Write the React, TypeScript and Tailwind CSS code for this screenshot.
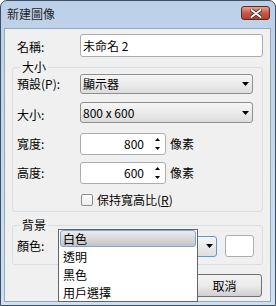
import React from 'react';

const ComboArrow: React.FC = () => (
  <svg width="7" height="4" viewBox="0 0 7 4" className="shrink-0">
    <path d="M0 0h7L3.5 4z" fill="#000" />
  </svg>
);

const SpinArrows: React.FC = () => (
  <svg width="5" height="14" viewBox="0 0 5 14" className="shrink-0">
    <path d="M2.5 1L5 4H0z" fill="#000" />
    <path d="M0 10h5l-2.5 3z" fill="#000" />
  </svg>
);

const CloseButton: React.FC = () => (
  <div className="mt-[5px] mr-[1px] w-[29px] h-[14px] rounded-[3px] border border-[#5e2a24] bg-gradient-to-b from-[#e4a193] via-[#c8594b] to-[#b83c2d] flex items-center justify-center">
    <svg width="12" height="9" viewBox="0 0 12 9">
      <path d="M1.5 1l9 7M10.5 1l-9 7" stroke="#4a2420" strokeWidth="3.6" strokeLinecap="round" />
      <path d="M1.5 1l9 7M10.5 1l-9 7" stroke="#ffffff" strokeWidth="2" strokeLinecap="round" />
    </svg>
  </div>
);

const comboCls =
  'h-full flex items-center justify-between pl-[2px] pr-[3px] rounded-[3px] border border-[#8e8f8f] bg-gradient-to-b from-[#f6f6f6] via-[#ebebeb] to-[#dcdcdc]';

const btnCls =
  'w-[75px] h-[23px] flex items-center justify-center rounded-[3px] border border-[#707070] bg-gradient-to-b from-[#f2f2f2] via-[#ebebeb] to-[#cfcfcf]';

export default function App() {
  return (
    <div className="w-[276px] h-[306px] font-['Noto_Sans_CJK_TC',sans-serif] text-[12px] leading-[14px] text-black">
      <div className="w-full h-full flex flex-col rounded-t-[7px] border border-[#3f4e60] bg-gradient-to-b from-[#bcd0e8] to-[#cfe0f2] pl-[3px] pr-[4px] pb-[3px]">
        {/* Title bar */}
        <div className="h-[27px] shrink-0 flex items-start justify-between">
          <span className="mt-[6px] ml-[3px] text-[#1e1e1e]">新建圖像</span>
          <CloseButton />
        </div>

        {/* Client area */}
        <div className="flex-1 relative bg-[#f0f0f0] border border-[#95a8be]">
          {/* Name */}
          <div className="mt-[5px] flex items-center h-[23px]">
            <div className="w-[75px] pl-[12px] pt-[2px]">名稱:</div>
            <div className="w-[183px] h-full flex items-center pl-[2px] rounded-[3px] border border-[#abadb3] bg-white">
              未命名 2
            </div>
          </div>

          {/* Size group */}
          <fieldset className="mt-[3px] ml-[7px] w-[251px] rounded-[3px] border border-[#d5dfe5] pb-[5px]">
            <legend className="ml-[7px] px-[2px] leading-[14px]">大小</legend>
            <div className="flex items-center h-[20px]">
              <div className="w-[67px] pl-[4px]">預設(P):</div>
              <div className={`w-[173px] ${comboCls}`}>
                <span>顯示器</span>
                <ComboArrow />
              </div>
            </div>
            <div className="mt-[8px] flex items-center h-[21px]">
              <div className="w-[67px] pl-[4px] pt-[5px]">大小:</div>
              <div className={`w-[173px] ${comboCls}`}>
                <span>800 x 600</span>
                <ComboArrow />
              </div>
            </div>
            <div className="mt-[10px] flex items-center h-[22px]">
              <div className="w-[67px] pl-[4px]">寬度:</div>
              <div className="w-[86px] h-full flex items-center justify-end pr-[5px] rounded-[3px] border border-[#abadb3] bg-white">
                <span>800</span>
                <span className="ml-[11px] flex"><SpinArrows /></span>
              </div>
              <span className="ml-[4px]">像素</span>
            </div>
            <div className="mt-[7px] flex items-center h-[22px]">
              <div className="w-[67px] pl-[4px]">高度:</div>
              <div className="w-[86px] h-full flex items-center justify-end pr-[5px] rounded-[3px] border border-[#abadb3] bg-white">
                <span>600</span>
                <span className="ml-[11px] flex"><SpinArrows /></span>
              </div>
              <span className="ml-[4px]">像素</span>
            </div>
            <div className="mt-[9px] flex items-center h-[13px]">
              <div className="w-[68px]" />
              <div className="w-[12px] h-[12px] rounded-[2px] border border-[#8f8f8f] bg-gradient-to-b from-[#ffffff] to-[#ececec]" />
              <span className="ml-[4px]">
                保持寬高比(<span className="underline">R</span>)
              </span>
            </div>
          </fieldset>

          {/* Background group */}
          <fieldset className="mt-[6px] ml-[7px] w-[251px] rounded-[3px] border border-[#d5dfe5] pt-[3px] pb-[7px]">
            <legend className="ml-[7px] px-[2px] leading-[14px]">背景</legend>
            <div className="flex items-center h-[22px]">
              <div className="w-[67px] pl-[4px]">顏色:</div>
              <div className="w-[137px] h-[21px] flex items-center justify-end pr-[3px] rounded-[3px] border border-[#5a9bd8] bg-gradient-to-b from-[#f6f6f6] to-[#dedede]">
                <ComboArrow />
              </div>
              <div className="ml-[8px] w-[29px] h-[22px] rounded-[3px] border border-[#adadad] bg-white" />
            </div>
          </fieldset>

          {/* Buttons */}
          <div className="mt-[9px] flex justify-end gap-[7px] pr-[8px]">
            <div className={btnCls}>確定</div>
            <div className={btnCls}>取消</div>
          </div>

          {/* Open dropdown list */}
          <div className="absolute left-[53px] top-[200px] w-[140px] h-[73px] border border-[#646464] bg-white">
            <div className="h-[18px]">
              <div className="mx-[1px] h-[17px] flex items-center pl-[2px] rounded-[3px] border border-[#7aa7d8] bg-gradient-to-b from-[#ececec] to-[#c4c4c4]">
                白色
              </div>
            </div>
            <div className="h-[18px] flex items-center pl-[4px]">透明</div>
            <div className="h-[18px] flex items-center pl-[4px]">黑色</div>
            <div className="h-[18px] flex items-center pl-[4px]">用戶選擇</div>
          </div>
        </div>
      </div>
    </div>
  );
}
